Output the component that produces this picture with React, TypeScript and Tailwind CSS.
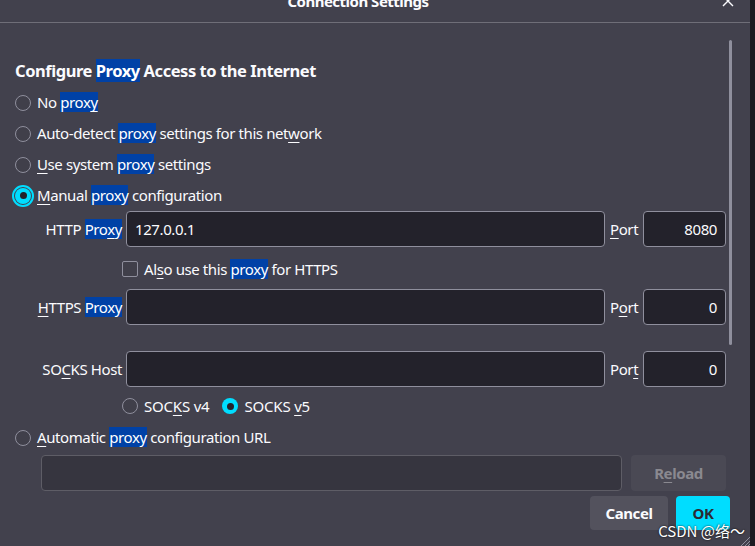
import type { ReactNode } from 'react'

const font = { fontFamily: '"Noto Sans", "Noto Sans CJK SC", sans-serif' }

function Hl({ children }: { children: ReactNode }) {
  return <span className="bg-[#0041a6] text-white">{children}</span>
}

function U({ children }: { children: ReactNode }) {
  return <span className="underline decoration-1 underline-offset-[3px]">{children}</span>
}

function Radio({ checked = false, focused = false }: { checked?: boolean; focused?: boolean }) {
  return (
    <span
      className={
        'flex h-4 w-4 shrink-0 items-center justify-center rounded-full ' +
        (checked ? 'bg-[#00ddff] ' : 'border border-[#8f8f9d] bg-[#403f4a] ') +
        (focused ? 'outline-2 outline-offset-1 outline-[#00ddff]' : '')
      }
    >
      {checked && <span className="h-[7px] w-[7px] rounded-full bg-[#23222b]" />}
    </span>
  )
}

function RadioRow({ children, checked, focused }: { children: ReactNode; checked?: boolean; focused?: boolean }) {
  return (
    <div className="flex h-[31px] items-center gap-[6px]">
      <Radio checked={checked} focused={focused} />
      <span>{children}</span>
    </div>
  )
}

function Field({ value = '', right = false }: { value?: string; right?: boolean }) {
  return (
    <div
      className={
        'flex h-9 items-center rounded-[4px] border border-[#8f8f9d] bg-[#23222b] px-[8px] ' +
        (right ? 'justify-end' : '')
      }
    >
      {value}
    </div>
  )
}

function ProxyRow({ label, value, port, portLabel }: { label: ReactNode; value?: string; port: string; portLabel: ReactNode }) {
  return (
    <div className="flex h-9 items-center">
      <div className="w-[107px] shrink-0 text-right">{label}</div>
      <div className="ml-[4px] flex-1">
        <Field value={value} />
      </div>
      <div className="ml-[5px] w-[32px]">{portLabel}</div>
      <div className="ml-[1px] w-[83px]">
        <Field value={port} right />
      </div>
    </div>
  )
}

export default function App() {
  return (
    <div
      className="relative flex h-[546px] w-[755px] overflow-hidden bg-[#42414d] text-[15px] tracking-[-0.4px] text-[#fbfbfe]"
      style={font}
    >
      <div className="flex w-[750px] flex-col">
        {/* title bar, mostly scrolled out of view */}
        <div className="relative h-[23px] shrink-0 overflow-hidden border-b border-[#6f6e78]">
          <div className="mt-[-9px] pr-[34px] text-center text-[15px] font-bold leading-[20px] tracking-[-0.5px]">
            Connection Settings
          </div>
          <svg className="absolute right-[16px] top-[-5px]" width="12" height="12" viewBox="0 0 12 12">
            <path d="M1 1 L11 11 M11 1 L1 11" stroke="#fbfbfe" strokeWidth="1.4" />
          </svg>
        </div>

        <div className="flex">
          <div className="flex w-[726px] flex-col pl-[15px] pt-[36px]">
            <div className="h-[28px] text-[16.5px] font-bold leading-[24px] tracking-[-0.45px]">
              Configure <Hl>Proxy</Hl> Access to the Internet
            </div>
            <RadioRow>
              No <Hl>prox<U>y</U></Hl>
            </RadioRow>
            <RadioRow>
              Auto-detect <Hl>proxy</Hl> settings for this net<U>w</U>ork
            </RadioRow>
            <RadioRow>
              <U>U</U>se system <Hl>proxy</Hl> settings
            </RadioRow>
            <RadioRow checked focused>
              <U>M</U>anual <Hl>proxy</Hl> configuration
            </RadioRow>

            <ProxyRow
              label={<>HTTP <Hl>Pro<U>x</U>y</Hl></>}
              value="127.0.0.1"
              port="8080"
              portLabel={<><U>P</U>ort</>}
            />
            <div className="mt-[12px] flex h-[20px] items-center gap-[6px] pl-[107px]">
              <span className="h-4 w-4 rounded-[2px] border border-[#8f8f9d] bg-[#403f4a]" />
              <span>
                Al<U>s</U>o use this <Hl>proxy</Hl> for HTTPS
              </span>
            </div>
            <div className="mt-[10px]">
              <ProxyRow
                label={<><U>H</U>TTPS <Hl>Proxy</Hl></>}
                port="0"
                portLabel={<>P<U>o</U>rt</>}
              />
            </div>
            <div className="mt-[26px]">
              <ProxyRow
                label={<>SO<U>C</U>KS Host</>}
                port="0"
                portLabel={<>Por<U>t</U></>}
              />
            </div>
            <div className="mt-[9px] flex h-[20px] items-center pl-[107px]">
              <Radio />
              <span className="ml-[6px] tracking-[-0.2px]">
                SOC<U>K</U>S v4
              </span>
              <span className="ml-[13px]">
                <Radio checked />
              </span>
              <span className="ml-[6px] tracking-[-0.2px]">
                SOCKS <U>v</U>5
              </span>
            </div>
            <div className="mt-[6px]">
              <RadioRow>
                <U>A</U>utomatic <Hl>proxy</Hl> configuration URL
              </RadioRow>
            </div>
            <div className="mt-[2px] flex h-9 pl-[26px]">
              <div className="flex-1 rounded-[4px] border border-[#5e5d66] bg-[#36353f]" />
              <div className="ml-[9px] flex w-[95px] items-center justify-center rounded-[4px] bg-[#4a4954] font-bold text-[#8a8990]">
                R<U>e</U>load
              </div>
            </div>
          </div>
          <div className="ml-[3px] mt-[17px] h-[305px] w-[3px] rounded-full bg-[#8f8f9d]" />
        </div>

        <div className="mt-[5px] flex justify-end gap-[8px] pr-[20px]">
          <div className="flex h-[34px] w-[78px] items-center justify-center rounded-[4px] bg-[#53525d] font-bold">Cancel</div>
          <div className="flex h-[34px] w-[54px] items-center justify-center rounded-[4px] bg-[#00ddff] font-bold text-[#2b2a33]">OK</div>
        </div>
      </div>
      <div className="w-[5px] bg-[#1c1b22]" />

      <svg className="absolute bottom-0 right-[5px]" width="11" height="11" viewBox="0 0 11 11">
        <path d="M11 2 L2 11 M11 6 L6 11 M11 9 L9 11" stroke="#8f8f9d" strokeWidth="1" />
      </svg>
      <div
        className="absolute right-[10px] top-[521px] text-[15px] leading-[20px] tracking-normal text-white [text-shadow:0_0_2px_#000]"
        style={{ fontFamily: '"Noto Sans CJK SC", sans-serif' }}
      >
        CSDN&nbsp;@络～
      </div>
    </div>
  )
}
